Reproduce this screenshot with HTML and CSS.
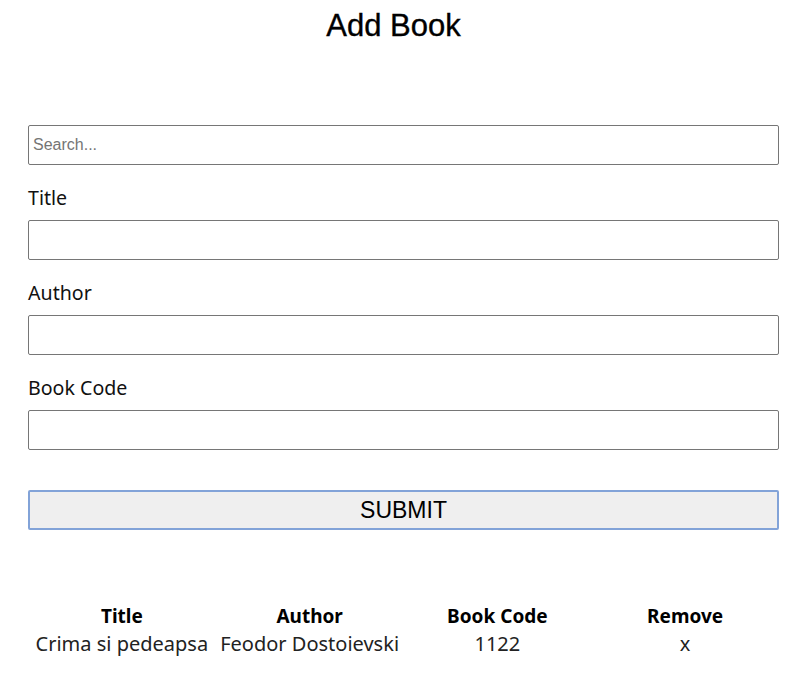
FILE: index.html
```html
<!DOCTYPE html>
<html lang="en">
<head>
<meta charset="utf-8">
<title>Add Book</title>
<link rel="stylesheet" href="styles.css">
</head>
<body>
<div class="page">
  <h1 class="heading">Add Book</h1>
  <form class="book-form">
    <input class="field search" type="text" placeholder="Search...">
    <label class="label" for="title">Title</label>
    <input class="field" id="title" type="text">
    <label class="label" for="author">Author</label>
    <input class="field" id="author" type="text">
    <label class="label" for="code">Book Code</label>
    <input class="field" id="code" type="text">
    <button class="submit" type="button">SUBMIT</button>
  </form>
  <table class="books">
    <thead>
      <tr><th>Title</th><th>Author</th><th>Book Code</th><th>Remove</th></tr>
    </thead>
    <tbody>
      <tr><td>Crima si pedeapsa</td><td>Feodor Dostoievski</td><td>1122</td><td class="remove">x</td></tr>
    </tbody>
  </table>
</div>
</body>
</html>
```
FILE: styles.css
```css
html, body {
  margin: 0;
  padding: 0;
  background: #ffffff;
}
.page {
  padding: 8px 28px;
  font-family: "Noto Sans", Lato, sans-serif;
  color: #1a1a1a;
}
.heading {
  margin: 0 0 81px 0;
  font-family: "Liberation Sans", Arial, sans-serif;
  font-size: 31px;
  font-weight: normal;
  line-height: 36px;
  text-align: center;
  padding-right: 20px;
  color: #000000;
  -webkit-text-stroke: 0.35px #000000;
}
.book-form {
  display: flex;
  flex-direction: column;
}
.field {
  box-sizing: border-box;
  height: 40px;
  width: 100%;
  margin: 0;
  border: 1px solid #767676;
  border-radius: 2px;
  padding: 0 4px;
  font-family: "Liberation Sans", Arial, sans-serif;
  font-size: 16px;
  background: #ffffff;
}
.field::placeholder {
  color: #757575;
}
.label {
  margin: 21px 0 10px 0;
  font-size: 19.6px;
  line-height: 24px;
  color: #111111;
}
.submit {
  box-sizing: border-box;
  height: 40px;
  margin-top: 40px;
  width: 100%;
  background: #efefef;
  border: 2px solid #82a3d8;
  border-radius: 2px;
  font-family: "Liberation Sans", Arial, sans-serif;
  font-size: 23px;
  color: #000000;
  padding: 0;
}
.books {
  margin-top: 72px;
  width: 100%;
  table-layout: fixed;
  border-collapse: collapse;
}
.books th {
  font-size: 19px;
  font-weight: bold;
  line-height: 28px;
  padding: 0;
  color: #000000;
}
.books td {
  font-size: 20px;
  line-height: 28px;
  padding: 0;
  text-align: center;
  color: #222222;
}
```
